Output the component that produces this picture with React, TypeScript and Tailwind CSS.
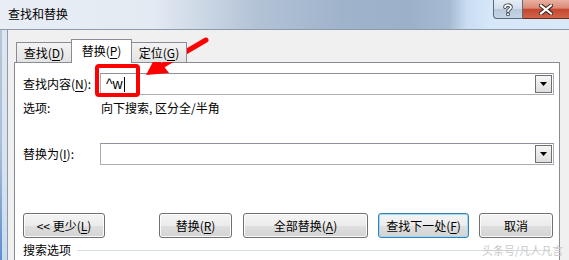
import React from "react";

const FONT = "font-['Noto_Sans_CJK_SC','Noto_Sans',sans-serif]";

function U({ children }: { children: React.ReactNode }) {
  return <span className="underline underline-offset-[2px] decoration-[1px]">{children}</span>;
}

function Combo({ children }: { children?: React.ReactNode }) {
  return (
    <div className="flex h-[22px] w-[454px] items-stretch border border-[#abadb3] border-t-[#8e9199] bg-white p-[1px]">
      <div className="flex flex-1 items-center pl-[3px] font-['Liberation_Sans',sans-serif] text-[14px] text-black">
        {children}
      </div>
      <div className="flex w-[17px] items-center justify-center border border-[#707070] bg-[linear-gradient(#f6f6f6,#dedede)]">
        <svg width="7" height="4" viewBox="0 0 7 4">
          <polygon points="0,0 7,0 3.5,4" fill="#000" />
        </svg>
      </div>
    </div>
  );
}

function Btn({
  className,
  children,
  focused,
}: {
  className: string;
  children: React.ReactNode;
  focused?: boolean;
}) {
  return (
    <div
      className={
        "flex h-[25px] items-center justify-center rounded-[3px] border text-[12px] leading-[16px] text-black bg-[linear-gradient(#f4f4f4_0%,#ececec_50%,#dfdfdf_52%,#d3d3d3_100%)] " +
        (focused
          ? "border-[#3c7fb1] shadow-[inset_0_0_0_1px_#9fd9f8] "
          : "border-[#707070] shadow-[inset_0_0_0_1px_#fbfbfb] ") +
        className
      }
    >
      {children}
    </div>
  );
}

export default function App() {
  return (
    <div className={`relative h-[260px] w-[569px] overflow-hidden bg-[#f0f0f0] ${FONT} text-[12px] leading-[16px] text-black`}>
      {/* Title bar */}
      <div className="flex h-[30px] items-start border-b border-[#8d9aab] bg-[linear-gradient(90deg,#e9eef5_0%,#e3eaf2_27%,#b3c3d6_45%,#9fb3cb_60%,#9cb1c9_72%,#a6bbd2_79%,#c9dcf1_82%,#d6e7f9_86%,#d9e9fa_100%)]">
        <span className="ml-[8px] mt-[6px] text-[12px] leading-[16px] text-black">查找和替换</span>
        <div className="ml-auto flex">
          <div className="flex h-[19px] w-[30px] items-center justify-center rounded-bl-[4px] border border-t-0 border-[#5b6a7d] bg-[linear-gradient(#e4ecf5_0%,#d3deea_50%,#b9c9db_51%,#c6d5e5_100%)]">
            <svg width="10" height="13" viewBox="0 0 10 13">
              <path
                d="M2 4.2 C2 1.6 8 1.4 8 4.2 C8 6.2 5 6.2 5 8.2"
                fill="none"
                stroke="#3a4452"
                strokeWidth="3.6"
                strokeLinecap="round"
              />
              <path
                d="M2 4.2 C2 1.6 8 1.4 8 4.2 C8 6.2 5 6.2 5 8.2"
                fill="none"
                stroke="#fff"
                strokeWidth="1.8"
                strokeLinecap="round"
              />
              <rect x="3.3" y="9.6" width="3.4" height="3.2" fill="#3a4452" rx="0.6" />
              <rect x="4.1" y="10.4" width="1.8" height="1.6" fill="#fff" />
            </svg>
          </div>
          <div className="flex h-[19px] w-[46px] items-center justify-center border-b border-[#6b2a22] bg-[linear-gradient(#eab0a2_0%,#d98a75_45%,#c4472f_52%,#d0654a_100%)]">
            <svg width="14" height="11" viewBox="0 0 14 11">
              <path d="M2 1.5 L12 9.5 M12 1.5 L2 9.5" stroke="#3b2420" strokeWidth="4.2" strokeLinecap="square" />
              <path d="M2 1.5 L12 9.5 M12 1.5 L2 9.5" stroke="#fff" strokeWidth="2.2" strokeLinecap="square" />
            </svg>
          </div>
        </div>
      </div>

      {/* Body */}
      <div className="flex h-[230px]">
        <div className="flex w-[7px]">
          <div className="w-[2px] bg-[linear-gradient(#b7c5d5,#a9bfd8_50%,#5d8fcf)]" />
          <div className="flex-1 bg-[linear-gradient(#dde6f0,#d8e3ef_60%,#c9daee)]" />
        </div>
        <div className="flex-1 border-l border-[#8d9aab] bg-[#f0f0f0] pl-[6px] pt-[9px]">
          {/* Tabs */}
          <div className="relative z-10 ml-[2px] flex h-[23px] items-end">
            <div className="flex h-[20px] w-[56px] items-center justify-center border border-b-0 border-[#898c95] bg-[linear-gradient(#f3f3f3,#e3e3e3)] pt-[1px]">
              查找(<U>D</U>)
            </div>
            <div className="-mb-px -ml-px flex h-[24px] w-[61px] items-start justify-center border border-b-0 border-[#898c95] bg-white pt-[3px]">
              替换(<U>P</U>)
            </div>
            <div className="-ml-px flex h-[20px] w-[56px] items-center justify-center border border-b-0 border-[#898c95] bg-[linear-gradient(#f3f3f3,#e3e3e3)] pt-[1px]">
              定位(<U>G</U>)
            </div>
          </div>

          {/* Panel */}
          <div className="h-[220px] w-[546px] border border-[#898c95] bg-white pl-[8px] pr-[5px] pt-[10px]">
            <div className="flex h-[22px] items-center">
              <span className="w-[77px]">
                查找内容(<U>N</U>):
              </span>
              <Combo>
                <span className="ml-[1px]">^w</span>
                <span className="ml-[1px] inline-block h-[15px] w-px bg-black" />
              </Combo>
            </div>

            <div className="mt-[5px] flex h-[16px] items-center">
              <span className="w-[78px]">选项:</span>
              <span>向下搜索, 区分全/半角</span>
            </div>

            <div className="mt-[27px] flex h-[22px] items-center">
              <span className="w-[77px]">
                替换为(<U>I</U>):
              </span>
              <Combo />
            </div>

            <div className="mt-[48px] flex items-center">
              <Btn className="w-[82px]">
                &lt;&lt; 更少(<U>L</U>)
              </Btn>
              <Btn className="ml-[54px] w-[73px]">
                替换(<U>R</U>)
              </Btn>
              <Btn className="ml-[11px] w-[125px]">
                全部替换(<U>A</U>)
              </Btn>
              <Btn className="ml-[10px] w-[91px]" focused>
                查找下一处(<U>F</U>)
              </Btn>
              <Btn className="ml-[10px] w-[74px]">取消</Btn>
            </div>

            <div className="mt-[4px] flex h-[16px] items-center">
              <span>搜索选项</span>
              <div className="ml-[6px] mr-[3px] h-px flex-1 bg-[#d5dfe5]" />
            </div>
          </div>
        </div>
      </div>

      {/* Annotation overlay */}
      <div className="pointer-events-none absolute left-[95px] top-[64px] h-[33px] w-[45px] rounded-[4px] border-[4px] border-[#ff0000]" />
      <svg className="pointer-events-none absolute left-0 top-0" width="569" height="260" viewBox="0 0 569 260">
        <line x1="206" y1="40" x2="160" y2="67" stroke="#ff0000" strokeWidth="5" strokeLinecap="round" />
        <polygon points="146,75 156,56 169,73" fill="#ff0000" />
      </svg>

      {/* Watermark */}
      <div className="pointer-events-none absolute left-[482px] top-[243px] text-[11px] leading-[14px] text-[#c9c9c9]">
        头条号/凡人凡言
      </div>
    </div>
  );
}
